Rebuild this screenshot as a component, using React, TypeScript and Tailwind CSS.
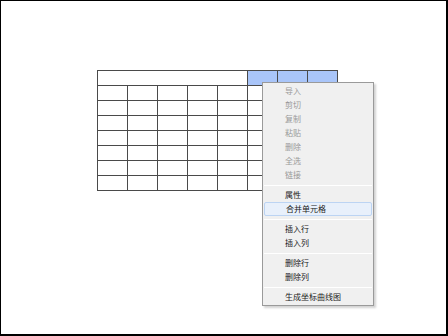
import React from 'react';

type Item = { label: string; disabled?: boolean; active?: boolean } | 'sep';

const menu: Item[] = [
  { label: '导入', disabled: true },
  { label: '剪切', disabled: true },
  { label: '复制', disabled: true },
  { label: '粘贴', disabled: true },
  { label: '删除', disabled: true },
  { label: '全选', disabled: true },
  { label: '链接', disabled: true },
  'sep',
  { label: '属性' },
  { label: '合并单元格', active: true },
  'sep',
  { label: '插入行' },
  { label: '插入列' },
  'sep',
  { label: '删除行' },
  { label: '删除列' },
  'sep',
  { label: '生成坐标曲线图' },
];

const cell = 'border border-[#4a4a4a] w-[30px] h-[15px] p-0';

export default function App() {
  return (
    <div
      className="w-[448px] h-[336px] bg-white border-l border-t border-r-2 border-b-2 border-black overflow-hidden"
      style={{ fontFamily: '"Noto Sans CJK SC", "Noto Sans", sans-serif' }}
    >
      <div className="relative pt-[69px] pl-[96px]">
        {/* Grid */}
        <table className="border-collapse table-fixed">
          <tbody>
            <tr>
              <td colSpan={5} className={cell} />
              <td className={`${cell} bg-[#a9c5f9]`} />
              <td className={`${cell} bg-[#a9c5f9]`} />
              <td className={`${cell} bg-[#a9c5f9]`} />
            </tr>
            {Array.from({ length: 7 }).map((_, r) => (
              <tr key={r}>
                {Array.from({ length: 8 }).map((_, c) => (
                  <td key={c} className={cell} />
                ))}
              </tr>
            ))}
          </tbody>
        </table>

        {/* Context menu */}
        <div className="absolute left-[261px] top-[81px] w-[112px] bg-[#f0f0f0] border border-[#9a9a9a] p-px shadow-[2px_2px_2px_rgba(0,0,0,0.18)]">
          {menu.map((it, i) =>
            it === 'sep' ? (
              <div key={i} className="h-[6px] flex items-center">
                <div className="w-full h-px bg-[#dcdcdc] border-b border-white" />
              </div>
            ) : (
              <div
                key={i}
                className={`h-[14px] flex items-center pl-[21px] text-[8px] leading-none ${
                  it.active ? 'bg-[#e8f0fb] border border-[#bcd4f3] rounded-[2px] pl-[20px]' : ''
                } ${it.disabled ? 'text-[#9a9a9a]' : 'text-[#1a1a1a]'}`}
              >
                {it.label}
              </div>
            )
          )}
        </div>
      </div>
    </div>
  );
}
